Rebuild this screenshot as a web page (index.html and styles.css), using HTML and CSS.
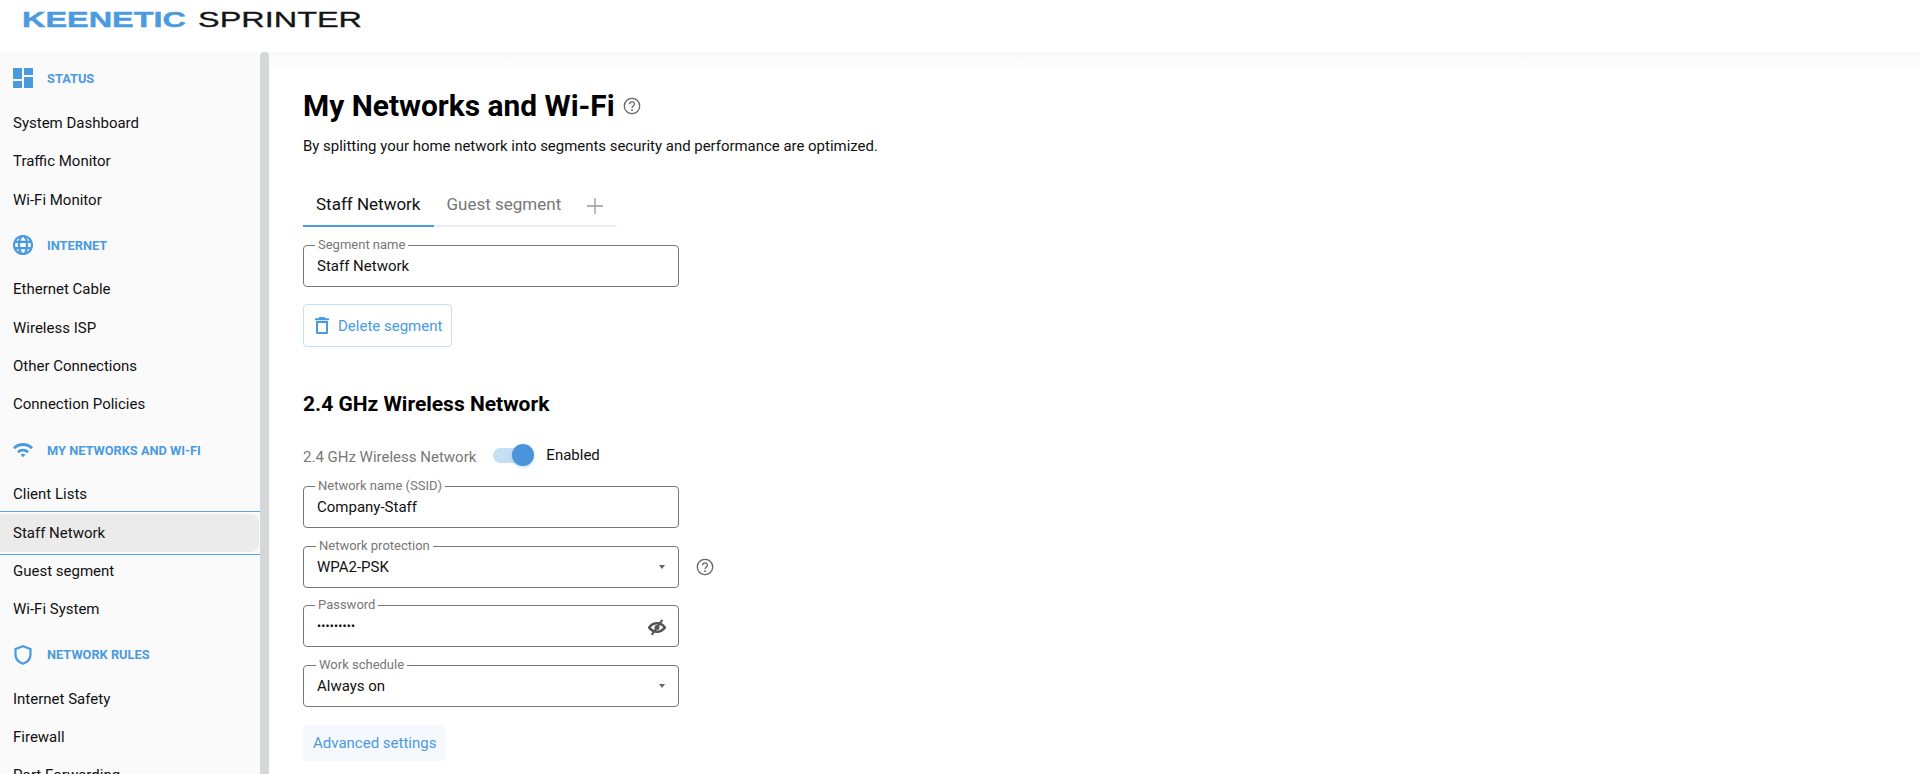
FILE: index.html
```html
<!DOCTYPE html>
<html lang="en">
<head>
    <meta charset="UTF-8">
    <meta name="viewport" content="width=device-width, initial-scale=1.0">
    <title>My Networks and Wi-Fi - Keenetic Sprinter</title>
    <link rel="stylesheet" href="styles.css">
</head>
<body>
    <!-- Logo -->
    <header class="topbar">
        <svg class="logo" width="370" height="36" viewBox="0 0 370 36">
            <text class="logo-brand" x="22" y="27" textLength="164" lengthAdjust="spacingAndGlyphs">KEENETIC</text>
            <text class="logo-model" x="198" y="27" textLength="164" lengthAdjust="spacingAndGlyphs">SPRINTER</text>
        </svg>
    </header>

    <div class="layout">
        <!-- Side menu -->
        <nav class="sidebar">
            <div class="menu-title">
                <svg class="menu-icon" viewBox="0 0 20 20"><path d="M0 0h9v11H0zM0 13h9v7H0zM11 0h9v7h-9zM11 9h9v11h-9z"/></svg>
                STATUS
            </div>
            <a class="menu-item">System Dashboard</a>
            <a class="menu-item">Traffic Monitor</a>
            <a class="menu-item">Wi-Fi Monitor</a>

            <div class="menu-title">
                <svg class="menu-icon menu-icon-line" viewBox="0 0 20 20"><circle cx="10" cy="10" r="9"/><ellipse cx="10" cy="10" rx="4" ry="9"/><path d="M1.600 6.800h16.800M1.600 13.200h16.800"/></svg>
                INTERNET
            </div>
            <a class="menu-item">Ethernet Cable</a>
            <a class="menu-item">Wireless ISP</a>
            <a class="menu-item">Other Connections</a>
            <a class="menu-item">Connection Policies</a>

            <div class="menu-title">
                <svg class="menu-icon" viewBox="0 0 20 20"><path d="M0 7.200C5.500 1.600 14.500 1.600 20 7.200l-2 2C13.600 4.800 6.400 4.800 2 9.200zM4 11.200c3.300-3.300 8.700-3.300 12 0l-2 2c-2.200-2.200-5.800-2.200-8 0zM7.600 14.800c1.300-1.300 3.500-1.300 4.800 0L10 17.200z"/></svg>
                MY NETWORKS AND WI-FI
            </div>
            <a class="menu-item">Client Lists</a>
            <a class="menu-item menu-item-active"><span class="menu-item-fill">Staff Network</span></a>
            <a class="menu-item">Guest segment</a>
            <a class="menu-item">Wi-Fi System</a>

            <div class="menu-title">
                <svg class="menu-icon menu-icon-line" viewBox="0 0 20 20"><path d="M10 1.200 17.500 4v5.500c0 4.300-3 7.700-7.500 9.300-4.500-1.600-7.500-5-7.500-9.300V4z"/></svg>
                NETWORK RULES
            </div>
            <a class="menu-item">Internet Safety</a>
            <a class="menu-item">Firewall</a>
            <a class="menu-item">Port Forwarding</a>
        </nav>

        <div class="scrollbar"></div>

        <!-- Main content -->
        <main class="content">
            <div class="title-row">
                <h1>My Networks and Wi-Fi</h1>
                <svg class="help-icon" viewBox="0 0 18 18"><circle cx="9" cy="9" r="7.700"/><path d="M6.700 7.200c0-3 4.700-3 4.700-.1 0 1.900-2.400 1.900-2.400 3.900"/><path class="help-dot" d="M8.200 12.300h1.600v1.600H8.200z"/></svg>
            </div>
            <p class="subtitle">By splitting your home network into segments security and performance are optimized.</p>

            <div class="tabs">
                <span class="tab tab-active">Staff Network</span>
                <span class="tab">Guest segment</span>
                <svg class="tab-add" viewBox="0 0 16 16"><path d="M8 0v16M0 8h16"/></svg>
            </div>

            <div class="field">
                <label class="field-label">Segment name</label>
                <span class="field-value">Staff Network</span>
            </div>

            <button class="delete-button">
                <svg class="delete-icon" viewBox="0 0 14 17"><path d="M4.500 0h5l1 1.200H14v2H0v-2h3.500z"/><path class="delete-can" d="M2 5h10v10.500a.5.5 0 0 1-.5.5h-9a.5.5 0 0 1-.5-.5z"/></svg>
                Delete segment
            </button>

            <h2>2.4 GHz Wireless Network</h2>

            <div class="toggle-row">
                <span class="toggle-label">2.4 GHz Wireless Network</span>
                <span class="toggle"><span class="toggle-thumb"></span></span>
                <span class="toggle-state">Enabled</span>
            </div>

            <div class="fields">
                <div class="field">
                    <label class="field-label">Network name (SSID)</label>
                    <span class="field-value">Company-Staff</span>
                </div>
                <div class="field-row">
                    <div class="field">
                        <label class="field-label field-label-select">Network protection</label>
                        <span class="field-value">WPA2-PSK</span>
                        <span class="caret"></span>
                    </div>
                    <svg class="help-icon" viewBox="0 0 18 18"><circle cx="9" cy="9" r="7.700"/><path d="M6.700 7.200c0-3 4.700-3 4.700-.1 0 1.900-2.400 1.900-2.400 3.900"/><path class="help-dot" d="M8.200 12.300h1.600v1.600H8.200z"/></svg>
                </div>
                <div class="field">
                    <label class="field-label">Password</label>
                    <span class="field-value field-password">•••••••••</span>
                    <svg class="eye-icon" viewBox="0 0 18 18"><path class="eye-shape" d="M1.200 9.500c3.700-5.600 11.900-5.600 15.600 0-3.700 5.600-11.900 5.600-15.600 0z"/><circle class="eye-pupil" cx="9" cy="9.500" r="2.500"/><path class="eye-slash" d="M14.300 1.800 3.700 16.800"/></svg>
                </div>
                <div class="field">
                    <label class="field-label field-label-select">Work schedule</label>
                    <span class="field-value">Always on</span>
                    <span class="caret"></span>
                </div>
            </div>

            <button class="advanced-button">Advanced settings</button>
        </main>
    </div>
</body>
</html>
```

FILE: styles.css
```css
html, body {
    height: 100%;
}

body {
    font-family: 'Roboto', 'Liberation Sans', sans-serif;
    margin: 0;
    background: white;
    color: #111;
    overflow: hidden;
}

/* Top bar */
.topbar {
    height: 52px;
    background: white;
}

.logo {
    display: block;
}

.logo-brand,
.logo-model {
    font-family: 'Liberation Sans', sans-serif;
    font-size: 22.500px;
}

.logo-brand {
    font-weight: 700;
    fill: #4a9ae0;
    stroke: #4a9ae0;
    stroke-width: 0.400px;
}

.logo-model {
    fill: #151515;
    stroke: #151515;
    stroke-width: 0.300px;
}

.layout {
    display: flex;
    height: calc(100vh - 52px);
}

/* Side menu */
.sidebar {
    width: 260px;
    flex: none;
    padding-top: 4px;
    background: #fafafa;
    overflow: hidden;
}

.menu-title {
    display: flex;
    align-items: center;
    gap: 14px;
    height: 46px;
    margin-top: 3.500px;
    margin-bottom: 2px;
    padding-left: 13px;
    font-size: 12.800px;
    font-weight: 700;
    color: #4a9ae0;
}

.sidebar .menu-title:first-child {
    margin-top: -1px;
    margin-bottom: 3px;
}

.menu-icon {
    width: 20px;
    height: 20px;
    flex: none;
    fill: #4a9ae0;
}

.menu-icon-line {
    fill: none;
    stroke: #4a9ae0;
    stroke-width: 2.200;
}

.menu-item {
    display: block;
    height: 38.300px;
    padding-left: 13px;
    font-size: 15px;
    line-height: 38.300px;
    color: #111;
}

.menu-item-active {
    height: 42px;
    margin: -2.850px 0;
    padding-left: 0;
    border-top: 1.500px solid #5ba6e6;
    border-bottom: 1.500px solid #5ba6e6;
}

.menu-item-fill {
    display: block;
    height: 38px;
    margin: 2px 1px 2px 0;
    padding-left: 13px;
    line-height: 38px;
    background: #ebebeb;
    border-radius: 0 8px 8px 0;
}

.scrollbar {
    width: 9px;
    flex: none;
    background: #d5d7d9;
    border-radius: 4px 4px 0 0;
}

/* Main content */
.content {
    flex: 1;
    padding: 36px 0 0 34px;
    background: linear-gradient(#f8f8f8, white 20px);
}

h1 {
    font-size: 29.900px;
    font-weight: 700;
    line-height: 36px;
    margin: 0;
    color: black;
}

.title-row {
    display: flex;
    align-items: center;
    gap: 8px;
}

.help-icon {
    width: 18px;
    height: 18px;
    flex: none;
    fill: none;
    stroke: #666;
    stroke-width: 1.300;
}

.help-dot {
    fill: #666;
    stroke: none;
}

.subtitle {
    font-size: 14.950px;
    line-height: 20px;
    margin: 12px 0 0;
}

/* Tabs */
.tabs {
    display: flex;
    align-items: center;
    width: 314px;
    height: 43px;
    margin-top: 28px;
    box-shadow: inset 0 -2px 0 #eeeeee;
}

.tab {
    padding: 0 13px;
    height: 43px;
    font-size: 17px;
    line-height: 41px;
    color: #777;
    box-sizing: border-box;
}

.tab-active {
    color: #111;
    border-bottom: 2px solid #4a9ae0;
}

.tab-add {
    width: 16px;
    height: 16px;
    margin-left: 13px;
    fill: none;
    stroke: #999;
    stroke-width: 1.300;
}

/* Form fields */
.field {
    position: relative;
    display: flex;
    align-items: center;
    width: 376px;
    height: 42px;
    box-sizing: border-box;
    padding: 0 13px;
    border: 1.500px solid #777;
    border-radius: 4px;
    background: white;
}

.tabs + .field {
    margin-top: 18px;
}

.field-label {
    position: absolute;
    top: -8px;
    left: 11px;
    padding: 0 3px;
    font-size: 13px;
    line-height: 14px;
    color: #777;
    background: white;
}

.field-label-select {
    left: 12px;
}

.field-value {
    font-size: 15px;
    color: #111;
}

.field-password {
    margin-top: 1px;
    font-size: 11px;
    font-weight: 700;
    line-height: 14px;
    letter-spacing: 0.300px;
}

.caret {
    margin-left: auto;
    margin-right: 0;
    border-top: 4px solid #666;
    border-left: 3px solid transparent;
    border-right: 3px solid transparent;
}

.eye-icon {
    width: 18px;
    height: 18px;
    margin-top: 1px;
    margin-left: auto;
    margin-right: -1px;
}

.eye-shape {
    fill: none;
    stroke: #555;
    stroke-width: 2.600;
}

.eye-pupil {
    fill: #555;
}

.eye-slash {
    stroke: #555;
    stroke-width: 2;
}

.fields {
    display: flex;
    flex-direction: column;
    gap: 17.700px;
    margin-top: 19px;
}

.field-row {
    display: flex;
    align-items: center;
    gap: 17px;
}

/* Buttons */
.delete-button {
    display: flex;
    align-items: center;
    gap: 9px;
    height: 43px;
    margin-top: 17px;
    padding: 0 9px 0 11px;
    font-family: inherit;
    font-size: 15px;
    color: #4a9ae0;
    background: white;
    border: 1px solid #c5e0f5;
    border-radius: 4px;
}

.delete-icon {
    width: 14px;
    height: 17px;
    fill: #4a9ae0;
}

.delete-can {
    fill: none;
    stroke: #4a9ae0;
    stroke-width: 2;
}

.advanced-button {
    display: block;
    height: 36px;
    margin-top: 18px;
    padding: 0 10px;
    font-family: inherit;
    font-size: 15px;
    color: #4a9ae0;
    background: #f5f9fd;
    border: none;
    border-radius: 4px;
}

/* Section */
h2 {
    font-size: 21px;
    font-weight: 700;
    line-height: 26px;
    margin: 44px 0 0;
    color: black;
}

.toggle-row {
    display: flex;
    align-items: center;
    height: 24px;
    margin-top: 26px;
    font-size: 15px;
}

.toggle-label {
    color: #777;
    margin-top: 3px;
}

.toggle {
    position: relative;
    width: 33px;
    height: 15px;
    margin-left: 17px;
    background: #c5dff5;
    border-radius: 8px;
}

/* thumb sits over the track */
.toggle-thumb {
    position: absolute;
    top: -4px;
    right: -8px;
    width: 22px;
    height: 22px;
    background: #4a94dc;
    border-radius: 50%;
    box-shadow: 0 1px 3px rgba(74, 148, 220, 0.4);
}

.toggle-state {
    margin-left: 20px;
}
```
